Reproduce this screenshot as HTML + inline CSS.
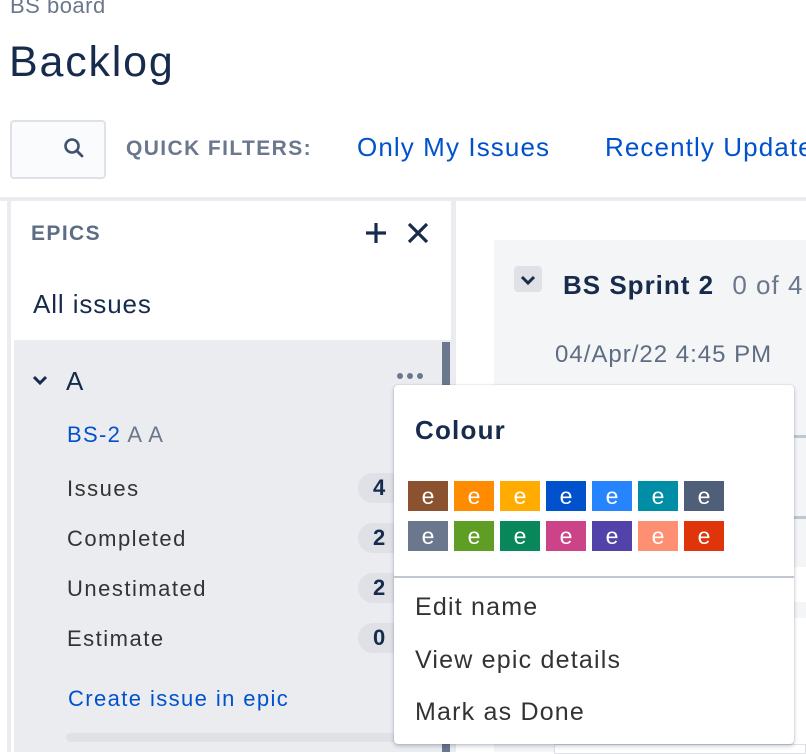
<!DOCTYPE html>
<html><head><meta charset="utf-8"><style>
*{margin:0;padding:0;box-sizing:border-box}
body{width:806px;height:752px;overflow:hidden;background:#fff;font-family:"Liberation Sans",sans-serif;position:relative;color:#172B4D}
.a{position:absolute;white-space:nowrap}
.sw{position:absolute;width:40px;height:30px;color:#fff;font-size:23px;text-align:center;line-height:30px}
.badge{position:absolute;left:358px;width:60px;height:30px;border-radius:15px;background:#DFE1E6;font-weight:bold;font-size:22px;line-height:30px;padding-left:15px;color:#172B4D}
.lbl{position:absolute;left:67px;font-size:22px;color:#333;letter-spacing:1.5px}
.mi{position:absolute;left:415px;font-size:25px;color:#333;letter-spacing:1.2px}
</style></head><body>
<div class="a" style="left:10px;top:-7px;font-size:22px;color:#6B778C;letter-spacing:0.5px">BS board</div>
<div class="a" style="left:9px;top:38px;font-size:43px;color:#172B4D;letter-spacing:1.8px">Backlog</div>
<div class="a" style="left:10px;top:120px;width:96px;height:59px;background:#FAFBFC;border:2px solid #DFE1E6;border-radius:4px"></div>
<svg class="a" style="left:62px;top:136px" width="24" height="24" viewBox="0 0 24 24"><circle cx="10" cy="10" r="6.5" fill="none" stroke="#42526E" stroke-width="2.6"/><path d="M15 15l5 5" stroke="#42526E" stroke-width="2.8" stroke-linecap="round"/></svg>
<div class="a" style="left:126px;top:137px;font-size:21px;font-weight:bold;color:#6B778C;letter-spacing:1.4px">QUICK FILTERS:</div>
<div class="a" style="left:357px;top:132px;font-size:26px;color:#0052CC;letter-spacing:1.1px">Only My Issues</div>
<div class="a" style="left:605px;top:132px;font-size:26px;color:#0052CC;letter-spacing:1.1px">Recently Updated</div>
<div class="a" style="left:0;top:197px;width:806px;height:4px;background:#EBECF0"></div>
<div class="a" style="left:7px;top:200px;width:4px;height:552px;background:#EBECF0"></div>
<div class="a" style="left:451px;top:200px;width:5px;height:552px;background:#EBECF0"></div>
<div class="a" style="left:14px;top:340px;width:437px;height:412px;background:#EBECF0"></div>
<div class="a" style="left:442px;top:342px;width:8px;height:410px;background:#6B778C"></div>
<div class="a" style="left:31px;top:222px;font-size:21px;font-weight:bold;color:#5E6C84;letter-spacing:1.4px">EPICS</div>
<svg class="a" style="left:364px;top:221px" width="24" height="24"><path d="M12 2v20M2 12h20" stroke="#172B4D" stroke-width="3.2"/></svg>
<svg class="a" style="left:407px;top:222px" width="22" height="22"><path d="M2 2l18 18M20 2L2 20" stroke="#172B4D" stroke-width="3.2"/></svg>
<div class="a" style="left:33px;top:289px;font-size:26px;color:#172B4D;letter-spacing:0.9px">All issues</div>
<svg class="a" style="left:32px;top:374px" width="16" height="12"><path d="M2 3l6 6 6-6" fill="none" stroke="#172B4D" stroke-width="3"/></svg>
<div class="a" style="left:66px;top:366px;font-size:26px">A</div>
<svg class="a" style="left:396px;top:372px" width="30" height="8"><circle cx="4" cy="4" r="3" fill="#6B778C"/><circle cx="14" cy="4" r="3" fill="#6B778C"/><circle cx="24" cy="4" r="3" fill="#6B778C"/></svg>
<div class="a" style="left:67px;top:422px;font-size:22px;color:#0052CC;letter-spacing:1.3px">BS-2 <span style="color:#6B778C">A A</span></div>
<div class="lbl" style="top:476px">Issues</div><div class="badge" style="top:473px">4</div>
<div class="lbl" style="top:526px">Completed</div><div class="badge" style="top:523px">2</div>
<div class="lbl" style="top:576px">Unestimated</div><div class="badge" style="top:573px">2</div>
<div class="lbl" style="top:626px">Estimate</div><div class="badge" style="top:623px">0</div>
<div class="a" style="left:68px;top:686px;font-size:22px;color:#0052CC;letter-spacing:1.4px">Create issue in epic</div>
<div class="a" style="left:66px;top:733px;width:340px;height:9px;border-radius:5px;background:#DFE1E6"></div>
<div class="a" style="left:494px;top:240px;width:312px;height:512px;background:#F4F5F7"></div>
<div class="a" style="left:514px;top:266px;width:28px;height:26px;border-radius:4px;background:#DFE1E6"></div>
<svg class="a" style="left:520px;top:274px" width="16" height="12"><path d="M2 3l6 6 6-6" fill="none" stroke="#172B4D" stroke-width="3"/></svg>
<div class="a" style="left:563px;top:270px;font-size:26px;font-weight:bold;color:#172B4D;letter-spacing:1px">BS Sprint 2 <span style="font-weight:normal;color:#6B778C;margin-left:10px">0 of 4</span></div>
<div class="a" style="left:555px;top:341px;font-size:24px;color:#5E6C84;letter-spacing:1px">04/Apr/22 4:45 PM</div>
<div class="a" style="left:794px;top:435px;width:12px;height:3px;background:#C1C7D0"></div>
<div class="a" style="left:794px;top:516px;width:12px;height:3px;background:#C1C7D0"></div>
<div class="a" style="left:794px;top:567px;width:12px;height:35px;background:#fff"></div>
<div class="a" style="left:794px;top:618px;width:12px;height:130px;background:#fff"></div>
<div class="a" style="left:554px;top:744px;width:252px;height:10px;background:#fff;border:1px solid #DFE1E6"></div>
<div class="a" style="left:394px;top:385px;width:400px;height:359px;background:#fff;border-radius:4px;box-shadow:0 2px 4px rgba(9,30,66,.25),0 0 1px rgba(9,30,66,.31)"></div>
<div class="a" style="left:415px;top:415px;font-size:26px;font-weight:bold;color:#172B4D;letter-spacing:1.2px">Colour</div>
<div class="sw" style="left:408px;top:481px;background:#8B5230">e</div>
<div class="sw" style="left:454px;top:481px;background:#FF8B00">e</div>
<div class="sw" style="left:500px;top:481px;background:#FFAB00">e</div>
<div class="sw" style="left:546px;top:481px;background:#0052CC">e</div>
<div class="sw" style="left:592px;top:481px;background:#2684FF">e</div>
<div class="sw" style="left:638px;top:481px;background:#008DA6">e</div>
<div class="sw" style="left:684px;top:481px;background:#505F79">e</div>
<div class="sw" style="left:408px;top:521px;background:#6B778C">e</div>
<div class="sw" style="left:454px;top:521px;background:#5E9E25">e</div>
<div class="sw" style="left:500px;top:521px;background:#08875A">e</div>
<div class="sw" style="left:546px;top:521px;background:#CD4387">e</div>
<div class="sw" style="left:592px;top:521px;background:#5243AA">e</div>
<div class="sw" style="left:638px;top:521px;background:#FF8F73">e</div>
<div class="sw" style="left:684px;top:521px;background:#DE350B">e</div>
<div class="a" style="left:394px;top:576px;width:400px;height:2px;background:#C1C7D0"></div>
<div class="mi" style="top:593px">Edit name</div>
<div class="mi" style="top:646px">View epic details</div>
<div class="mi" style="top:698px">Mark as Done</div>
</body></html>
